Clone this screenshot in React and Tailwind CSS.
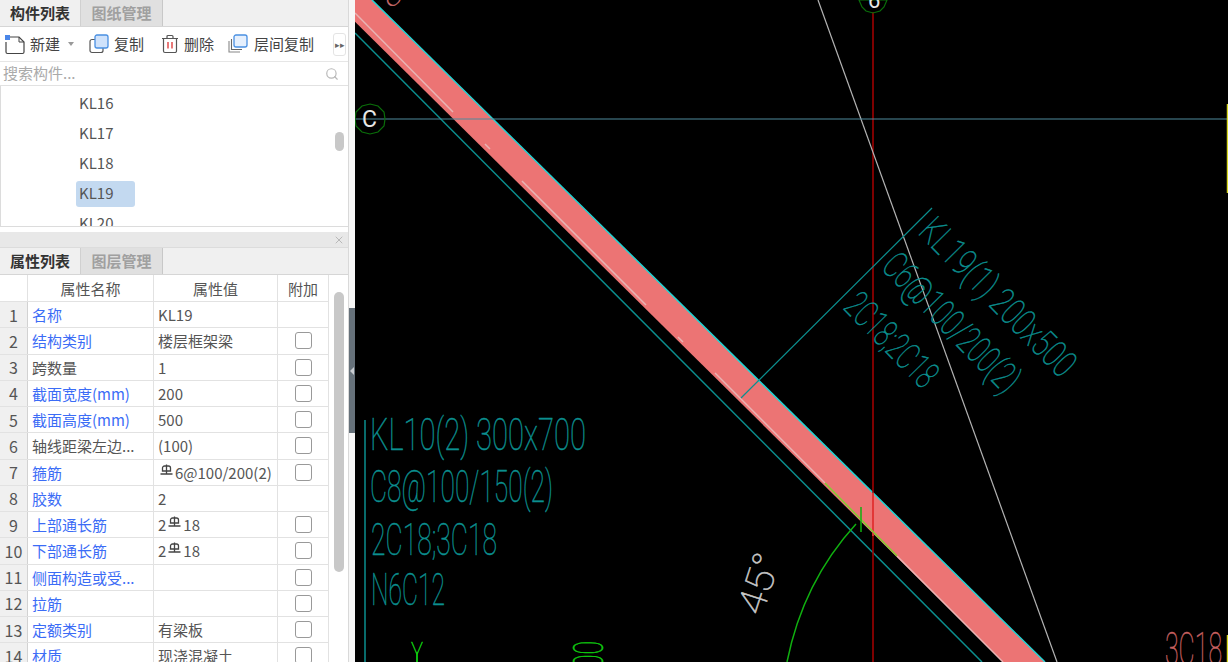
import { Search, X } from 'lucide-react';

const font = { fontFamily: '"Noto Sans CJK SC", "Noto Sans", sans-serif' };
const cad = '"Roboto", "Liberation Sans", sans-serif';

const rows = [
  { no: 1, name: '名称', blue: true, value: 'KL19' },
  { no: 2, name: '结构类别', blue: true, value: '楼层框架梁', check: true },
  { no: 3, name: '跨数量', value: '1', check: true },
  { no: 4, name: '截面宽度(mm)', blue: true, value: '200', check: true },
  { no: 5, name: '截面高度(mm)', blue: true, value: '500', check: true },
  { no: 6, name: '轴线距梁左边...', value: '(100)', check: true },
  { no: 7, name: '箍筋', blue: true, rebar: ['', '6@100/200(2)'], check: true },
  { no: 8, name: '胶数', blue: true, value: '2' },
  { no: 9, name: '上部通长筋', blue: true, rebar: ['2', '18'], check: true },
  { no: 10, name: '下部通长筋', blue: true, rebar: ['2', '18'], check: true },
  { no: 11, name: '侧面构造或受...', blue: true, check: true },
  { no: 12, name: '拉筋', blue: true, check: true },
  { no: 13, name: '定额类别', blue: true, value: '有梁板', check: true },
  { no: 14, name: '材质', blue: true, value: '现浇混凝土', check: true },
];

function RebarMark() {
  return (
    <svg width="13" height="13" viewBox="0 0 13 13" className="mb-1 shrink-0" fill="none" stroke="#444" strokeWidth="1.300">
      <path d="M2.500 7V4a2 2 0 0 1 2-2h4a2 2 0 0 1 2 2v3z" />
      <path d="M6.500 0.500V10M0.500 10h12" />
    </svg>
  );
}

function NewIcon() {
  return (
    <svg width="22" height="22" viewBox="0 0 22 22" fill="none">
      <path d="M6 4h9l5 5v10a1.500 1.500 0 0 1-1.500 1.500H3.500A1.500 1.500 0 0 1 2 19V9" stroke="#444" strokeWidth="1.200" />
      <path d="M15 4v5h5" stroke="#444" strokeWidth="1" />
      <rect x="1" y="2" width="5" height="5" fill="#4a86e8" />
    </svg>
  );
}

function CopyIcon() {
  return (
    <svg width="20" height="20" viewBox="0 0 20 20" fill="none">
      <rect x="1" y="5.500" width="13" height="13" rx="2" stroke="#555" strokeWidth="1.200" />
      <rect x="6" y="1" width="13" height="13" rx="2" fill="#cfe2fb" stroke="#4a90e2" strokeWidth="1.300" />
    </svg>
  );
}

function TrashIcon() {
  return (
    <svg width="18" height="20" viewBox="0 0 18 20" fill="none">
      <path d="M1 4.500h16M6 4.500V2.500a1 1 0 0 1 1-1h4a1 1 0 0 1 1 1v2" stroke="#555" strokeWidth="1.200" />
      <path d="M2.500 4.500v12.500a1.500 1.500 0 0 0 1.500 1.500h10a1.500 1.500 0 0 0 1.500-1.500V4.500" stroke="#555" strokeWidth="1.200" />
      <path d="M7 8v6.500M11 8v6.500" stroke="#e04040" strokeWidth="1.400" />
    </svg>
  );
}

function LayerCopyIcon() {
  return (
    <svg width="20" height="20" viewBox="0 0 20 20" fill="none">
      <path d="M1 7v11h11" stroke="#888" strokeWidth="1.100" />
      <path d="M3.500 5v10.500H14" stroke="#666" strokeWidth="1.100" />
      <rect x="6" y="1" width="13" height="12" rx="2" fill="#e6f0fd" stroke="#4a90e2" strokeWidth="1.300" />
    </svg>
  );
}

function Tabs({ first, second }) {
  return (
    <div className="flex h-[27px] shrink-0 border-b border-[#d6d6d6] bg-[#f0f0f0]">
      <div className="flex w-[81px] items-center justify-center border-r border-[#d0d0d0] text-[15px] font-bold text-[#333]">{first}</div>
      <div className="flex w-[82px] items-center justify-center border-r border-[#c8c8c8] bg-[#e0e0e0] text-[15px] font-bold text-[#a0a0a0]">{second}</div>
    </div>
  );
}

function TableRow({ row }) {
  return (
    <div className="grid h-[26.25px] grid-cols-[28px_126px_124px_51px] border-b border-[#e2e2e2] text-[15px] leading-none">
      <div className="flex items-center justify-center border-r border-[#d2d2d2] bg-[#f0f0f0] text-[16px] text-[#555]">{row.no}</div>
      <div className={`flex items-center overflow-hidden whitespace-nowrap border-r border-[#e2e2e2] pl-[4px] ${row.blue ? 'text-[#3b6cf6]' : 'text-[#555]'}`}>{row.name}</div>
      <div className="flex items-center overflow-hidden whitespace-nowrap border-r border-[#e2e2e2] pl-[4px] text-[#555]">
        {row.rebar ? (
          <>
            <span>{row.rebar[0]}</span>
            <span className="mx-[2px]"><RebarMark /></span>
            <span>{row.rebar[1]}</span>
          </>
        ) : (
          row.value
        )}
      </div>
      <div className="flex items-center justify-center border-r border-[#e2e2e2]">
        {row.check && <div className="h-[17px] w-[17px] rounded-[3px] border border-[#999] bg-white" />}
      </div>
    </div>
  );
}

function Sidebar() {
  return (
    <div className="flex h-[662px] w-[349px] shrink-0 flex-col overflow-hidden border-r border-[#d9d9d9] bg-white" style={font}>
      <Tabs first="构件列表" second="图纸管理" />

      {/* toolbar */}
      <div className="flex h-[35px] shrink-0 items-center border-b border-[#e6e6e6] pl-[4px] text-[15px] text-[#444]">
        <NewIcon />
        <span className="ml-[4px]">新建</span>
        <span className="ml-[8px] h-0 w-0 border-x-[3px] border-t-[4px] border-x-transparent border-t-[#999]" />
        <span className="ml-[15px]"><CopyIcon /></span>
        <span className="ml-[5px]">复制</span>
        <span className="ml-[17px]"><TrashIcon /></span>
        <span className="ml-[5px]">删除</span>
        <span className="ml-[14px]"><LayerCopyIcon /></span>
        <span className="ml-[6px]">层间复制</span>
        <div className="ml-[19px] flex h-[23px] w-[13px] items-center justify-center rounded-[3px] border border-[#e4e4e4] text-[9px] leading-none text-[#666]">▸▸</div>
      </div>

      {/* search */}
      <div className="flex h-[24px] shrink-0 items-center justify-between border-b border-[#e2e2e2] pl-[3px] pr-[9px] text-[15px] text-[#aaa]">
        <span>搜索构件...</span>
        <Search size={14} color="#b8b8b8" strokeWidth={2} />
      </div>

      {/* component list */}
      <div className="flex h-[141px] shrink-0 overflow-hidden border-b border-l border-[#dcdcdc] text-[15px] text-[#555]">
        <div className="flex-1 pl-[75px] pt-[5px]">
          {['KL16', 'KL17', 'KL18', 'KL19', 'KL20'].map((name) => (
            <div key={name} className={`mb-[4px] flex h-[26px] w-[59px] items-center rounded-[3px] pb-[1px] pl-[3px] ${name === 'KL19' ? 'bg-[#c3d9f0]' : ''}`}>{name}</div>
          ))}
        </div>
        <div className="w-[13px] shrink-0 pt-[46px]">
          <div className="h-[19px] w-[9px] rounded-full bg-[#c8c8c8]" />
        </div>
      </div>

      <div className="h-[5px] shrink-0" />
      <div className="flex h-[16px] shrink-0 items-center justify-end border-b border-[#dcdcdc] bg-[#e8e8e8] pr-[3px]">
        <X size={12} color="#a8a8a8" strokeWidth={1.500} />
      </div>
      <Tabs first="属性列表" second="图层管理" />

      {/* property table */}
      <div className="flex flex-1 overflow-hidden">
        <div className="w-[329px] shrink-0">
          <div className="grid h-[27px] grid-cols-[28px_126px_124px_51px] border-b border-[#e2e2e2] text-[15px] leading-none text-[#555]">
            <div className="border-r border-[#e2e2e2]" />
            <div className="flex items-center justify-center border-r border-[#e2e2e2]">属性名称</div>
            <div className="flex items-center justify-center border-r border-[#e2e2e2]">属性值</div>
            <div className="flex items-center justify-center border-r border-[#e2e2e2]">附加</div>
          </div>
          {rows.map((row) => (
            <TableRow key={row.no} row={row} />
          ))}
        </div>
        <div className="pl-[5px] pt-[17px]">
          <div className="h-[280px] w-[10px] rounded-full bg-[#c8c8c8]" />
        </div>
      </div>
    </div>
  );
}

function Splitter() {
  return (
    <div className="h-[662px] w-[6px] shrink-0 bg-[#f7f7f7] pt-[308px]">
      <div className="flex h-[125px] items-center justify-center bg-[#66717a]">
        <span className="h-0 w-0 border-y-[4px] border-r-[4px] border-y-transparent border-r-[#c8ccd0]" />
      </div>
    </div>
  );
}

// thin squeezed text standing in for the CAD stroke font
function CadText({ x, y, angle = 0, size, length, color, children }) {
  return (
    <text
      transform={`translate(${x} ${y}) rotate(${angle})`}
      fontFamily={cad}
      fontWeight="100"
      fontSize={size}
      fill={color}
      stroke={color}
      strokeWidth="0.500"
      textLength={length}
      lengthAdjust="spacingAndGlyphs"
    >
      {children}
    </text>
  );
}

function Canvas() {
  const teal = '#0b8f8f';
  return (
    <div className="h-[662px] flex-1 overflow-hidden bg-black">
      <svg className="block h-full w-full" viewBox="355 0 873 662">
        {/* beam */}
        <polygon points="372,0 1045,662 1003,662 333,0" fill="#ec7474" />
        <line x1="372" y1="0" x2="1045" y2="662" stroke="#22d3d3" strokeWidth="1.500" />
        <g stroke="#e8b4b4" strokeWidth="1.500">
          <line x1="355" y1="13" x2="453" y2="112" />
          <line x1="485" y1="144" x2="490" y2="149" />
          <line x1="522" y1="181" x2="646" y2="305" />
          <line x1="678" y1="337" x2="683" y2="342" />
          <line x1="715" y1="373" x2="825" y2="483" />
          <line x1="897" y1="556" x2="1003" y2="662" />
        </g>
        <line x1="355" y1="33" x2="982" y2="662" stroke={teal} strokeWidth="1.500" />

        {/* axes */}
        <line x1="873" y1="12" x2="873" y2="662" stroke="#a80000" strokeWidth="1.500" />
        <line x1="873" y1="493" x2="873" y2="536" stroke="#f04040" strokeWidth="1.500" />
        <line x1="818" y1="0" x2="1057" y2="662" stroke="#b4b4b4" strokeWidth="1.200" />
        <line x1="355" y1="119" x2="1228" y2="119" stroke="#4f8a9c" strokeWidth="1.200" />
        <polygon points="370,104 378,106 384,112 385,119 384,126 378,132 370,134 362,132 356,126 355,119 356,112 362,106" fill="none" stroke="#0a6e0a" strokeWidth="1.200" />
        <text x="362" y="127" fontFamily={cad} fontWeight="400" fontSize="23" fill="#e8e8e8">C</text>
        <polygon points="859,0 862,7 866,11 873,13 880,11 884,7 887,0" fill="none" stroke="#0a6e0a" strokeWidth="1.200" />
        <text x="868" y="8" fontFamily={cad} fontWeight="400" fontSize="22" fill="#e8e8e8">6</text>

        {/* labels */}
        <CadText x={384} y={-1} angle={45} size={38} length={14} color="#d07070">8</CadText>
        <line x1="741" y1="398" x2="932" y2="208" stroke={teal} strokeWidth="1.200" />
        <CadText x={917} y={233} angle={45.500} size={38} length={205} color={teal}>KL19(1) 200x500</CadText>
        <CadText x={880} y={268} angle={45.500} size={38} length={178} color={teal}>C6@100/200(2)</CadText>
        <CadText x={842} y={308} angle={45.500} size={38} length={115} color={teal}>2C18;2C18</CadText>

        <line x1="365" y1="420" x2="365" y2="662" stroke={teal} strokeWidth="1.500" />
        <CadText x={370} y={450} size={45} length={216} color={teal}>KL10(2) 300x700</CadText>
        <CadText x={370} y={502} size={45} length={183} color={teal}>C8@100/150(2)</CadText>
        <CadText x={371} y={555} size={45} length={126} color={teal}>2C18;3C18</CadText>
        <CadText x={371} y={605} size={45} length={74} color={teal}>N6C12</CadText>

        {/* angle dimension */}
        <path d="M787 662Q803 582 856 524" fill="none" stroke="#10b010" strokeWidth="1.500" />
        <line x1="825" y1="483" x2="897" y2="556" stroke="#7fd02f" strokeWidth="1.500" />
        <line x1="861" y1="507" x2="861" y2="532" stroke="#10b010" strokeWidth="1.500" />
        <CadText x={762} y={617} angle={-72} size={38} length={62} color="#c8c8c8">45°</CadText>
        <CadText x={411} y={662} size={28} length={12} color="#10d010">Y</CadText>
        <line x1="417" y1="652" x2="417" y2="662" stroke="#10d010" strokeWidth="1.500" />
        <CadText x={603} y={668} angle={-90} size={42} length={27} color="#10d010">00</CadText>

        {/* right edge */}
        <CadText x={1165} y={665} size={46} length={57} color="#c86060">3C18</CadText>
        <line x1="1227.500" y1="104" x2="1227.500" y2="193" stroke="#d8d820" strokeWidth="1.500" />
        <line x1="1227.500" y1="635" x2="1227.500" y2="662" stroke="#d8d820" strokeWidth="1.500" />
      </svg>
    </div>
  );
}

export default function App() {
  return (
    <div className="flex h-[662px] w-[1228px] overflow-hidden bg-white">
      <Sidebar />
      <Splitter />
      <Canvas />
    </div>
  );
}
